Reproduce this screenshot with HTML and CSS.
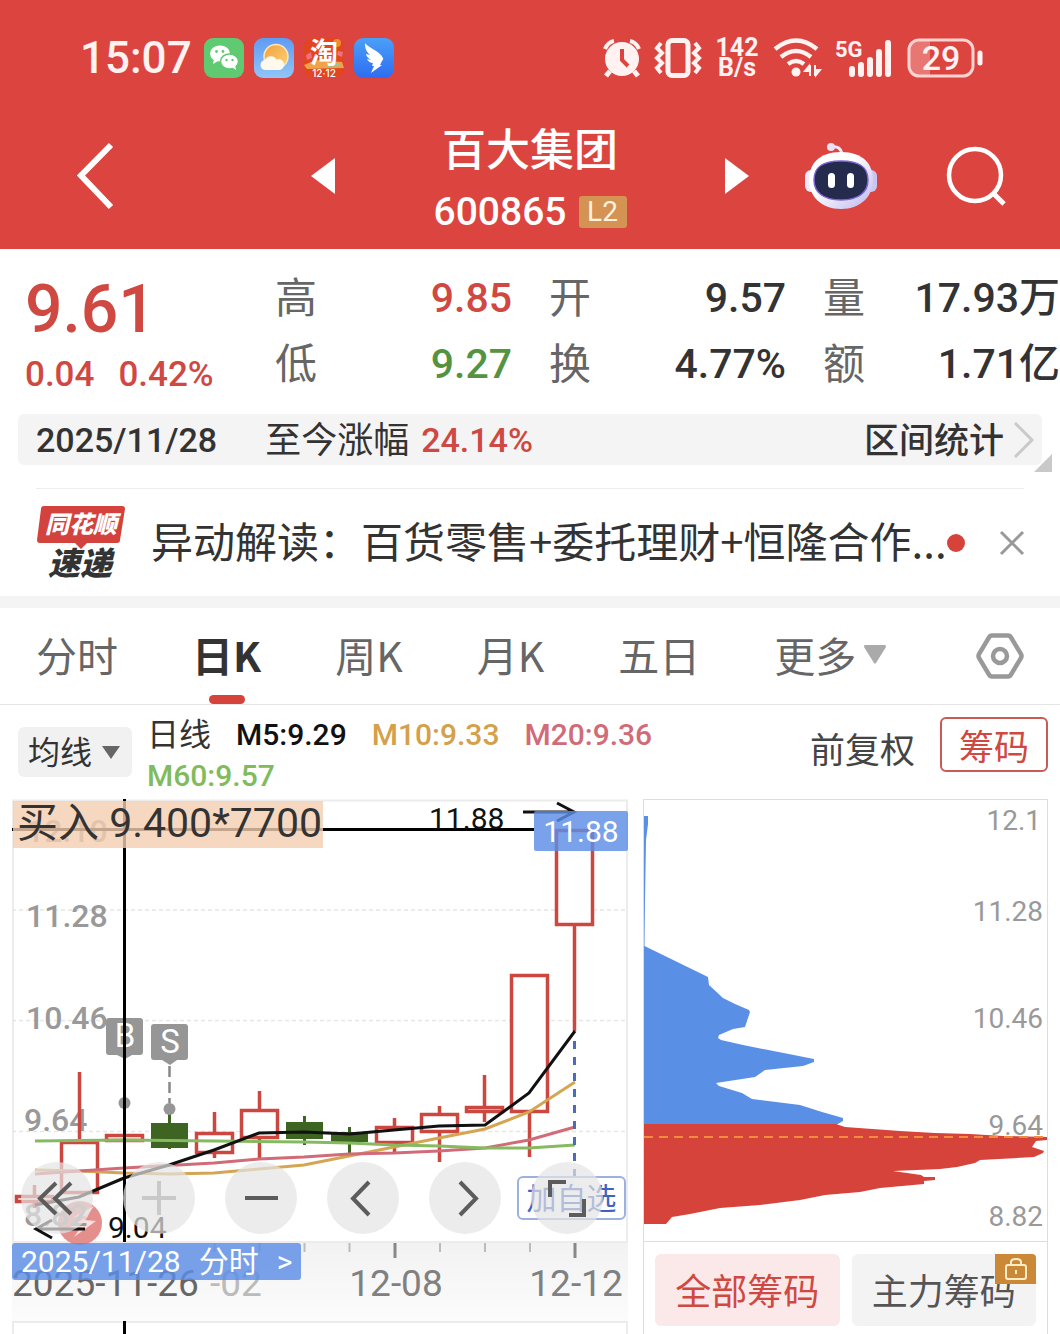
FILE: index.html
```html
<!DOCTYPE html>
<html lang="zh-CN">
<head>
<meta charset="utf-8">
<meta name="viewport" content="width=device-width, initial-scale=1">
<title>百大集团 600865</title>
<link rel="stylesheet" href="styles.css">
</head>
<body>
<header class="top">
  <div class="status">
    <div class="status-left">
      <span class="clock">15:07</span>
      <svg class="app" viewBox="0 0 40 40" aria-hidden="true"><rect width="40" height="40" rx="9" fill="#5fca71"/><ellipse cx="16" cy="15.500" rx="10" ry="8" fill="#fff"/><path d="M10 21l-1 5 5-3z" fill="#fff"/><circle cx="12.500" cy="13.500" r="1.400" fill="#5fca71"/><circle cx="19" cy="13.500" r="1.400" fill="#5fca71"/><ellipse cx="25.500" cy="23.500" rx="9" ry="7.500" fill="#fff" stroke="#5fca71" stroke-width="1.500"/><path d="M28 29l4 3-1-5z" fill="#fff"/><circle cx="22.500" cy="22" r="1.200" fill="#5fca71"/><circle cx="28.500" cy="22" r="1.200" fill="#5fca71"/></svg>
      <svg class="app" viewBox="0 0 40 40" aria-hidden="true"><defs><linearGradient id="sky" x2="0" y2="1"><stop stop-color="#5e9bf3"/><stop offset="1" stop-color="#91c5f8"/></linearGradient><linearGradient id="sun" x2="1" y2="1"><stop stop-color="#f0a03c"/><stop offset="1" stop-color="#ffd27a"/></linearGradient></defs><rect width="40" height="40" rx="9" fill="url(#sky)"/><circle cx="22" cy="18.500" r="12" fill="url(#sun)" stroke="#fbe7b8" stroke-width="1.500"/><path d="M12 32a5 5 0 0 1-1-10 6.500 6.500 0 0 1 11.500-.5 5.500 5.500 0 1 1 1.500 10.500z" fill="#fff8ec"/></svg>
      <svg class="app" viewBox="0 0 40 40" aria-hidden="true"><rect width="40" height="40" rx="9" fill="#e2451f"/><path d="M0 27L12 22 38 24 40 30 3 31z" fill="#f0a24a"/><circle cx="33" cy="5" r="4" fill="#ee8b2e"/><path d="M34 13l5 1-1 5-5-2zM2 17l5-3 1 6-5 2z" fill="#ef6f86"/><path d="M24 27l13-2-2 3-12 1z" fill="#8fc9a0"/><text x="20" y="25" class="tao">淘</text><text x="20" y="39" class="tao-date">12·12</text></svg>
      <svg class="app" viewBox="0 0 40 40" aria-hidden="true"><defs><linearGradient id="wing" x2="0" y2="1"><stop stop-color="#4aa0f7"/><stop offset="1" stop-color="#2f6cf2"/></linearGradient></defs><rect width="40" height="40" rx="9" fill="url(#wing)"/><path d="M11 5C13 9 26 13 29 20q1 1-1 3l-2 4h2L17 35l3-7h-2l1-3c-3 0-5-2-6-4l4 1c-3-2-5-4-5-6l4 1c-4-4-5-7-5-12z" fill="#fff"/></svg>
    </div>
    <div class="status-right">
      <svg class="ic-alarm" viewBox="0 0 38 40" aria-hidden="true"><circle cx="19" cy="21" r="17" fill="#fff2f1"/><path d="M2 11Q5 4 11 3M27 3Q33 4 36 11" fill="none" stroke="#fff2f1" stroke-width="4"/><path d="M7 33l-4 5M31 33l4 5" stroke="#fff2f1" stroke-width="5"/><path d="M19 11v11l6 6" fill="none" stroke="#dc4440" stroke-width="4"/></svg>
      <svg class="ic-vibe" viewBox="0 0 46 40" aria-hidden="true"><rect x="13" y="2.500" width="20" height="35" rx="4" fill="none" stroke="#fff2f1" stroke-width="5"/><path d="M6 5l-4 5 5 5-5 5 5 5-5 5 4 5M40 5l4 5-5 5 5 5-5 5 5 5-4 5" fill="none" stroke="#fff2f1" stroke-width="4"/></svg>
      <div class="speed"><span>142</span><span>B/s</span></div>
      <svg class="ic-wifi" viewBox="0 0 48 40" aria-hidden="true"><path d="M2 11Q23-6 44 11M8 19Q23 7 38 19M15 26Q23 20 31 26" fill="none" stroke="#fff2f1" stroke-width="4.500"/><circle cx="23" cy="34" r="4.500" fill="#fff2f1"/><path d="M37 27v11M32 33h4v-5zM42 27v11M47 32h-4v5z" fill="#fff2f1" stroke="#fff2f1" stroke-width="2"/></svg>
      <svg class="ic-signal" viewBox="0 0 58 40" aria-hidden="true"><text x="0" y="19" class="five-g">5G</text><path d="M17 31v5M26 27v9M35 22v14M44 14v22M53 5v31" stroke="#fff2f1" stroke-width="6" stroke-linecap="round"/></svg>
      <svg class="ic-battery" viewBox="0 0 76 40" aria-hidden="true"><path d="M10 3h13v34H10Q3 37 3 28V12q0-9 7-9z" fill="#e87672"/><rect x="2" y="2" width="64" height="36" rx="10" fill="none" stroke="#fbd3d1" stroke-width="3"/><path d="M73 15v10" stroke="#fff2f1" stroke-width="5" stroke-linecap="round"/><text x="34" y="32" class="charge">29</text></svg>
    </div>
  </div>
  <nav class="title-bar">
    <div class="side side-left">
      <button class="icon-btn" aria-label="返回"><svg width="36" height="66" viewBox="0 0 36 66"><path d="M34 2L4 32.500 34 64" fill="none" stroke="#fff" stroke-width="6"/></svg></button>
      <button class="icon-btn" aria-label="上一只"><svg width="24" height="36" viewBox="0 0 24 36"><path d="M24 0v36L0 18z" fill="#fff"/></svg></button>
    </div>
    <div class="stock">
      <h1>百大集团</h1>
      <div class="code"><span>600865</span><span class="level">L2</span></div>
    </div>
    <div class="side side-right">
      <button class="icon-btn" aria-label="下一只"><svg width="24" height="36" viewBox="0 0 24 36"><path d="M0 0v36l24-18z" fill="#fff"/></svg></button>
      <button class="icon-btn robot" aria-label="助手"><svg width="72" height="68" viewBox="0 0 72 68"><defs><linearGradient id="helm" x2="1" y2="1"><stop offset=".4" stop-color="#fff"/><stop offset="1" stop-color="#b9b6ee"/></linearGradient></defs><path d="M26 5q10-2 11 8" fill="none" stroke="#eee6f8" stroke-width="3"/><circle cx="26" cy="5" r="4" fill="#e9e0f5"/><rect y="28" width="12" height="22" rx="6" fill="#eceafb"/><rect x="60" y="28" width="12" height="22" rx="6" fill="#c9c7f2"/><path d="M36 10c22 0 32 12 32 28S56 67 36 67 4 54 4 38s10-28 32-28z" fill="url(#helm)"/><path d="M36 19c20 0 27 7 27 19s-9 20-27 20S9 50 9 38s7-19 27-19z" fill="#252b4d" stroke="#7f66d8" stroke-width="1.500"/><rect x="23" y="31" width="7" height="15" rx="3.500" fill="#fff"/><rect x="42" y="31" width="7" height="15" rx="3.500" fill="#fff"/></svg></button>
      <button class="icon-btn search" aria-label="搜索"><svg width="60" height="60" viewBox="0 0 60 60"><circle cx="29" cy="29" r="26" fill="none" stroke="#fff" stroke-width="4.500"/><path d="M47 47l11 11" stroke="#fff" stroke-width="5"/></svg></button>
    </div>
  </nav>
</header>
<main>
  <section class="quote">
    <div class="price-box">
      <strong class="price">9.61</strong>
      <div class="change"><span>0.04</span><span>0.42%</span></div>
    </div>
    <dl class="pair"><dt>高</dt><dd class="up">9.85</dd><dt>低</dt><dd class="down">9.27</dd></dl>
    <dl class="pair"><dt>开</dt><dd>9.57</dd><dt>换</dt><dd>4.77%</dd></dl>
    <dl class="pair"><dt>量</dt><dd>17.93万</dd><dt>额</dt><dd>1.71亿</dd></dl>
  </section>
  <section class="interval">
    <span class="interval-date">2025/11/28</span>
    <span class="interval-gain">至今涨幅</span>
    <b class="interval-rate">24.14%</b>
    <a class="interval-link" href="#stats"><span>区间统计</span><svg width="20" height="36" viewBox="0 0 20 36" aria-hidden="true"><path d="M1 1l17 17L1 35" fill="none" stroke="#c9c9c9" stroke-width="3"/></svg></a>
    <svg class="corner" width="18" height="18" viewBox="0 0 18 18" aria-hidden="true"><path d="M18 0v18H0z" fill="#c9c9c9"/></svg>
  </section>
  <section class="news">
    <svg class="news-logo" viewBox="0 0 88 74" aria-hidden="true"><path d="M7 0h78q3 0 3 3l-5 31q0 3-3 3H50l-6 6-6-6H3q-3 0-3-3L4 3q0-3 3-3z" fill="#d3423c"/><text x="44" y="27" class="logo-a">同花顺</text><text x="43" y="69" class="logo-b">速递</text></svg>
    <a class="news-title" href="#news">异动解读：百货零售+委托理财+恒隆合作...</a>
    <i class="dot"></i>
    <button class="icon-btn close" aria-label="关闭"><svg width="24" height="24" viewBox="0 0 24 24"><path d="M1 1l22 22M23 1L1 23" stroke="#999" stroke-width="3"/></svg></button>
  </section>
  <nav class="tabs">
    <button>分时</button>
    <button class="active">日K</button>
    <button>周K</button>
    <button>月K</button>
    <button>五日</button>
    <button class="more">更多<svg width="22" height="19" viewBox="0 0 22 19" aria-hidden="true"><path d="M1 0h20q1 0 1 2L12 18q-1 1-2 0L0 2Q0 0 1 0z" fill="#aaa"/></svg></button>
    <button class="gear" aria-label="设置"><svg width="48" height="46" viewBox="0 0 48 46"><path d="M16 2.500h16q2 0 3 2L45 21q1 2 0 4L35 41.500q-1 2-3 2H16q-2 0-3-2L3 25q-1-2 0-4L13 4.500q1-2 3-2z" fill="none" stroke="#999" stroke-width="4.500"/><circle cx="24" cy="23" r="7" fill="none" stroke="#999" stroke-width="4.500"/></svg></button>
  </nav>
  <section class="legend">
    <button class="ma-btn"><span>均线</span><svg width="18" height="13" viewBox="0 0 18 13" aria-hidden="true"><path d="M0 0h18L9 13z" fill="#666"/></svg></button>
    <div class="ma-list">
      <span class="ma-name">日线</span><span class="m5">M5:9.29</span><span class="m10">M10:9.33</span><span class="m20">M20:9.36</span><span class="m60">M60:9.57</span>
    </div>
    <span class="adjust">前复权</span>
    <button class="chip-btn">筹码</button>
  </section>
  <section class="charts">
    <div class="kline">
      <svg class="kline-svg" viewBox="12 799 616 535">
        <defs><linearGradient id="shade" x2="0" y2="1"><stop stop-color="#f2f2f2"/><stop offset="1" stop-color="#fcfcfc"/></linearGradient></defs>
        <rect x="12" y="1242" width="616" height="80" fill="url(#shade)"/>
        <path d="M12 800.500H628M12 1242H628M12 1322H628M13 800V1242M627 800V1242M13 1322V1334M627 1322V1334" fill="none" stroke="#ececec" stroke-width="2"/>
        <path d="M12 910H628M12 1020.500H628M12 1131.500H628" stroke="#e6e6e6" stroke-width="1.500" stroke-dasharray="4 3"/>
        <circle cx="80" cy="1223" r="22" fill="#e58f8d"/><path d="M66 1230l22-14-14 1 20-11-10 14 12 1-22 16 7-10z" fill="#fbdedd"/>
        <g class="axis"><text x="26" y="842">12.10</text><text x="26" y="927">11.28</text><text x="26" y="1029">10.46</text><text x="24" y="1131">9.64</text><text x="24" y="1226">8.82</text></g>
        <g fill="#fff" stroke="#cb4740" stroke-width="3.500">
          <path d="M34.500 1185V1208M79.500 1072V1142M214.500 1112V1158M259.500 1091V1158M394.500 1118V1152M439.500 1106V1162M484.500 1075V1122M529.500 1112V1157M574.500 925V1031"/>
          <path d="M124.500 1103V1165" stroke-width="1"/>
          <rect x="16.500" y="1196.500" width="36" height="5"/><rect x="61.500" y="1142.500" width="36" height="50" fill="none"/><rect x="106.500" y="1135.500" width="36" height="5"/><rect x="196.500" y="1133.500" width="36" height="19"/><rect x="241.500" y="1110.500" width="36" height="27"/><rect x="376.500" y="1127.500" width="36" height="15"/><rect x="421.500" y="1114.500" width="36" height="17"/><rect x="466.500" y="1107.500" width="36" height="4"/><rect x="511.500" y="975.500" width="36" height="136"/><rect x="556.500" y="830.500" width="36" height="94"/>
        </g>
        <g fill="#3d6420"><path d="M151 1123h37v25h-37zM168 1110h3v39h-3zM286 1122h37v17h-37zM303 1116h3v29h-3zM331 1132h37v10h-37zM348 1127h3v26h-3z"/></g>
        <g fill="none" stroke-width="3">
          <path d="M35 1170L79 1171 124 1173 169 1174 214 1173 259 1169 304 1165 349 1156 394 1147 439 1138 485 1129 529 1112 575 1082" stroke="#d4a552"/>
          <path d="M35 1174L124 1168 214 1163 259 1159 304 1157 349 1154 394 1153 439 1151 485 1148 529 1140 575 1127" stroke="#d26b78"/>
          <path d="M35 1141L124 1140 214 1141 304 1142 349 1143 394 1145 439 1146 485 1148 529 1148 575 1145" stroke="#86ba60"/>
          <path d="M35 1205L79 1197 124 1178 169 1165 214 1150 259 1133 304 1132 350 1134 394 1130 439 1126 485 1125 529 1093 575 1031" stroke="#111"/>
        </g>
        <path d="M574.500 1041V1180" stroke="#4a6cbd" stroke-width="3" stroke-dasharray="8 8"/>
        <path d="M169.500 1066V1103" stroke="#888" stroke-width="2.500" stroke-dasharray="11 5"/>
        <g fill="#969696"><circle cx="124.500" cy="1103" r="6"/><circle cx="169.500" cy="1109" r="6"/><path d="M109 1018h31q3 0 3 3v31q0 3-3 3h-8l-7 4-8-4h-8q-3 0-3-3v-31q0-3 3-3zM154 1024h31q3 0 3 3v30q0 3-3 3h-8l-7 5-8-5h-8q-3 0-3-3v-30q0-3 3-3z"/></g>
        <text x="125" y="1047" class="mark">B</text><text x="170" y="1053" class="mark">S</text>
        <path d="M12 829.500H534M124.500 799V1242M124.500 1321V1334" stroke="#000" stroke-width="3"/>
        <g class="extreme"><text x="429" y="829">11.88</text><text x="108" y="1238">9.04</text></g>
        <path d="M523 812H574M557 803L574 812 557 821M85 1229H36M52 1238L36 1229 52 1220" fill="none" stroke="#111" stroke-width="3"/>
        <rect x="13" y="801" width="310" height="47" fill="#f4ceb0" fill-opacity=".8"/><text x="17" y="837" class="trade">买入 9.400*7700</text>
        <rect x="534" y="811" width="94" height="40" rx="2" fill="#5b8ee6" fill-opacity=".82"/><text x="581" y="842" class="tag">11.88</text>
        <path d="M214.500 1243v9M259.500 1243v9M304.500 1243v9M349.500 1243v9M440 1243v9M485 1243v9M530 1243v9" stroke="#bbb" stroke-width="2"/><path d="M395 1243v15M575 1243v15" stroke="#888" stroke-width="3"/>
        <g class="days"><text x="210" y="1296" class="faded">-02</text><text x="12" y="1296" class="first">2025-11-26</text><text x="396" y="1296" class="mid">12-08</text><text x="576" y="1296" class="mid">12-12</text></g>
      </svg>
      <button class="date-tag"><span>2025/11/28</span><span>分时</span><span>&gt;</span></button>
      <button class="add-btn">加自选</button>
      <div class="controls">
        <button aria-label="最早"><svg viewBox="0 0 72 72"><path d="M35 21L19 36.500 35 52M50 21L34 36.500 50 52"/></svg></button>
        <button class="off" aria-label="放大"><svg viewBox="0 0 72 72"><path d="M36 19v34M19 36h34"/></svg></button>
        <button aria-label="缩小"><svg viewBox="0 0 72 72"><path d="M20 36h33"/></svg></button>
        <button aria-label="左移"><svg viewBox="0 0 72 72"><path d="M42 20L26 36.500 42 53"/></svg></button>
        <button aria-label="右移"><svg viewBox="0 0 72 72"><path d="M31 20L47 36.500 31 53"/></svg></button>
        <button aria-label="全屏"><svg viewBox="0 0 72 72"><path d="M19 35V20h16M38 53h15V37"/></svg></button>
      </div>
    </div>
    <div class="chips">
      <svg class="chips-svg" viewBox="644 800 403 441">
        <path d="M644 816L648 816 648 824 646 840 645 900 644.500 946 708 977 709 985 723 998 735 1004 749 1010 750 1012 745 1027 733 1029 719 1035 718 1038 721 1040 743 1045 814 1059 814 1062 803 1066 765 1070 755 1077 716 1083 719 1086 742 1093 752 1099 800 1105 822 1112 843 1118 843 1121 836 1125 644 1125z" fill="#5a8fe6"/>
        <path d="M644 1124L836 1124 845 1127 900 1131 935 1133 970 1134 1003 1136 1047 1137 1047 1140 1036 1141 1032 1147 1044 1151 1043 1153 1034 1157 980 1160 975 1163 957 1167 940 1169 893 1171 921 1175 924 1177 935 1177 935 1180 924 1181 924 1184 880 1188 860 1192 825 1195 800 1200 760 1205 720 1208 690 1214 672 1217 666 1224 644 1224z" fill="#d5433b"/>
        <path d="M644 1137H1047" stroke="#ef8d3c" stroke-width="2" stroke-dasharray="9 6"/>
        <g class="levels"><text x="1041" y="830">12.1</text><text x="1043" y="921">11.28</text><text x="1043" y="1028">10.46</text><text x="1043" y="1135">9.64</text><text x="1043" y="1226">8.82</text></g>
      </svg>
      <div class="chip-tabs">
        <button class="on">全部筹码</button>
        <button>主力筹码<svg class="lock" viewBox="0 0 41 30" aria-hidden="true"><path d="M0 0h37q4 0 4 4v26H0z" fill="#cb8836"/><rect x="11" y="11" width="20" height="14" rx="2" fill="none" stroke="#ffedc8" stroke-width="2"/><path d="M16 11V8q0-3 5-3t5 3v3M21 16v4" fill="none" stroke="#ffedc8" stroke-width="2"/></svg></button>
      </div>
    </div>
  </section>
</main>
</body>
</html>
```
FILE: styles.css
```css
:root {
  --red: #cf4841;
  --cjk: "Noto Sans CJK SC", sans-serif;
  --num: Roboto, "Noto Sans CJK SC", sans-serif;
}
* { box-sizing: border-box; }
body { margin: 0; background: #fff; color: #333; font-family: var(--cjk); overflow-x: hidden; }
button { margin: 0; padding: 0; border: 0; background: none; font: inherit; color: inherit; white-space: nowrap; }
a { color: inherit; text-decoration: none; }
svg { display: block; flex: none; overflow: visible; }
.icon-btn { display: flex; flex: none; }

.top { background: #dc4440; color: #fff; }
.status { display: flex; justify-content: space-between; padding: 38px 77px 0 80px; }
.status-left { display: flex; align-items: center; gap: 10px; }
.clock { font: 500 44px/40px var(--num); margin-right: 2px; color: #fff2f1; }
.app { width: 40px; height: 40px; }
.tao { font: 700 28px var(--cjk); fill: #fff; text-anchor: middle; }
.tao-date { font: 500 10px Inter, sans-serif; fill: #fff; text-anchor: middle; }
.status-right { display: flex; align-items: center; gap: 14px; }
.status-right svg { height: 40px; }
.ic-alarm { width: 38px; }
.ic-vibe { width: 46px; }
.speed { display: flex; flex-direction: column; width: 44px; text-align: center; font: 700 25px/20px var(--num); color: #fff2f1; }
.ic-wifi { width: 48px; }
.ic-signal { width: 58px; }
.ic-battery { width: 76px; }
.five-g { font: 700 22px var(--num); fill: #fff2f1; }
.charge { font: 500 34px var(--num); fill: #fff2f1; text-anchor: middle; }
.title-bar { display: grid; grid-template-columns: 1fr 390px 1fr; align-items: center; height: 171px; padding-top: 24px; }
.side { display: flex; align-items: center; }
.side-left { justify-content: space-between; padding-left: 77px; }
.side-right { padding-right: 54px; }
.robot { margin-left: 56px; }
.search { margin-left: auto; }
.stock { padding-top: 12px; text-align: center; }
h1 { margin: 0; font-size: 44px; font-weight: 500; line-height: 60px; }
.code { display: flex; justify-content: center; align-items: center; gap: 12px; font: 500 39px/70px var(--num); }
.level { width: 48px; background: #d49253; border-radius: 3px; font-size: 28px; font-weight: 400; line-height: 32px; color: #fff3e0; }

.quote { display: grid; grid-template-columns: 213fr 237fr 237fr 237fr; column-gap: 37px; padding: 16px 0 17px 25px; }
.price-box { color: var(--red); }
.price { display: block; font: 500 66px/90px var(--num); white-space: nowrap; }
.change { display: flex; gap: 24px; font: 500 35px/40px var(--num); white-space: nowrap; }
.pair { display: grid; grid-template-columns: auto 1fr; margin: 0; font-size: 42px; line-height: 60px; color: #666; }
.pair dt { padding-bottom: 6px; }
.pair dd { margin: 0; color: #333; text-align: right; font: 500 41px/66px var(--num); }
.pair .up { color: var(--red); }
.pair .down { color: #559340; }

.interval { position: relative; display: flex; align-items: center; height: 51px; margin: 0 18px; padding: 0 8px 0 18px; background: #f4f4f4; border-radius: 6px; font-size: 36px; line-height: 46px; }
.interval-date, .interval-rate { font: 500 34px/46px var(--num); }
.interval-gain { margin: 0 12px 0 48px; padding-bottom: 5px; }
.interval-rate { color: var(--red); }
.interval-link { display: flex; align-items: center; gap: 10px; margin-left: auto; font-size: 35px; font-weight: 500; }
.interval-link span { padding-bottom: 4px; }
.corner { position: absolute; right: -10px; bottom: -7px; }

.news { display: flex; align-items: center; height: 108px; margin: 23px 36px 0; border-top: 1px solid #eee; }
.news-logo { width: 88px; height: 74px; margin: 0 26px 0 1px; }
.logo-a { font: italic 900 24px var(--cjk); fill: #fff; text-anchor: middle; }
.logo-b { font: italic 900 32px var(--cjk); fill: #333; text-anchor: middle; }
.news-title { padding-bottom: 5px; font-size: 42px; line-height: 60px; white-space: nowrap; overflow: hidden; }
.dot { flex: none; width: 18px; height: 18px; border-radius: 50%; background: #d5433b; }
.close { margin-left: auto; }

.tabs { display: flex; align-items: center; gap: 74px; height: 109px; padding: 0 36px; border-top: 12px solid #f4f4f4; border-bottom: 1px solid #e5e5e5; font-size: 41px; line-height: 92px; color: #666; }
.tabs button { padding-bottom: 4px; }
.tabs .active { position: relative; color: #333; font-weight: 700; }
.active::after { content: ""; position: absolute; left: 50%; bottom: 0; width: 36px; height: 9px; margin-left: -18px; border-radius: 5px; background: #d5433b; }
.more { display: flex; align-items: center; gap: 8px; }
.tabs .gear { margin-left: auto; padding: 0; }

.legend { display: flex; align-items: flex-start; height: 94px; padding: 9px 12px 0 18px; }
.ma-btn { display: flex; flex: none; align-items: center; justify-content: space-between; width: 114px; height: 50px; margin-top: 13px; padding: 0 12px 0 10px; background: #f1f1f1; border-radius: 6px; font-size: 32px; line-height: 46px; }
.ma-btn span { padding-bottom: 4px; }
.ma-list { display: flex; flex: 1; flex-wrap: wrap; column-gap: 25px; margin-left: 15px; font: 500 30px/41px var(--num); }
.ma-name { font: 400 32px/37px var(--cjk); }
.m5 { color: #111; }
.m10 { color: #d4a04a; }
.m20 { color: #d26b78; }
.m60 { color: #80bb5c; }
.adjust { margin: 9px 25px 0 24px; font-size: 35px; line-height: 50px; color: #444; }
.chip-btn { width: 108px; height: 55px; margin-top: 3px; border: 2px solid #cb5a55; border-radius: 6px; font-size: 35px; line-height: 48px; color: #cf4841; }

.charts { display: grid; grid-template-columns: 616fr 405fr; column-gap: 15px; padding: 0 12px; }
.kline { position: relative; }
.kline-svg, .chips-svg { width: 100%; height: auto; }
.kline-svg { overflow: hidden; }
.axis { font: 500 32px var(--num); fill: #999; }
.mark { font: 400 33px var(--num); fill: #fff; text-anchor: middle; }
.extreme { font: 400 30px var(--num); fill: #111; }
.trade { font: 400 41px var(--num); fill: #333; }
.tag { font: 400 30px var(--num); fill: #fff; text-anchor: middle; }
.days { font: 400 37px var(--num); fill: #808080; }
.first { fill: #666; }
.mid { text-anchor: middle; }
.faded { fill: #bbb; }
.date-tag { position: absolute; left: 0; top: 444px; display: flex; align-items: center; gap: 18px; height: 37px; padding: 0 9px; border-radius: 3px; background: rgba(91, 142, 230, .82); color: #fff; font: 400 30px/37px var(--num); }
.add-btn { position: absolute; right: 2px; top: 377px; width: 109px; height: 44px; padding-bottom: 4px; border: 2px solid #9db1e0; border-radius: 6px; background: #fff; color: #3f62c0; font-size: 30px; line-height: 36px; }
.controls { position: absolute; left: 9px; right: 25px; top: 363px; display: flex; justify-content: space-between; }
.controls button { width: 72px; height: 72px; border-radius: 50%; background: rgba(228, 228, 228, .7); }
.controls path { fill: none; stroke: #5c5c5c; stroke-width: 4; }
.controls .off path { stroke: #c9c9c9; }

.chips { border: 1px solid #ddd; border-bottom: 0; }
.levels { font: 400 28px var(--num); fill: #999; text-anchor: end; }
.chip-tabs { display: grid; grid-template-columns: 1fr 1fr; gap: 12px; padding: 12px 11px 8px; border-top: 1px solid #ddd; }
.chip-tabs button { position: relative; height: 72px; padding-bottom: 2px; border-radius: 6px; background: #f3f3f3; color: #555; font-size: 36px; }
.chip-tabs .on { background: #fbe8e9; color: #cf4841; }
.lock { position: absolute; top: 0; right: 0; width: 41px; height: 30px; }
```
